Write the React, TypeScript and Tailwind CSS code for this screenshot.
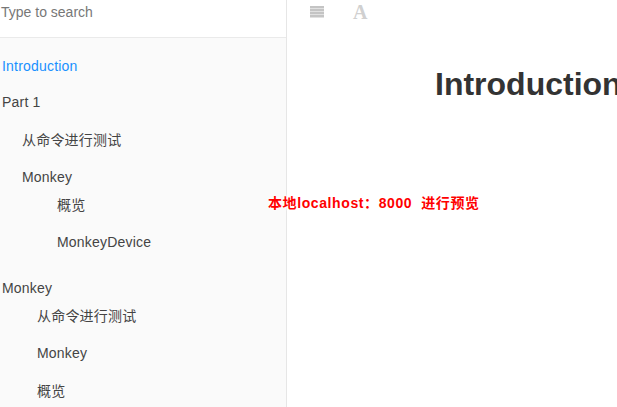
import React from 'react'

const CJK = `font-['Liberation_Sans','Noto_Sans_CJK_SC',sans-serif]`

const ITEMS = [
  { label: 'Introduction', cls: 'h-[36px] pl-[2px] text-[#1890ff]' },
  { label: 'Part 1', cls: 'h-[38px] pl-[2px]' },
  { label: '从命令进行测试', cls: 'h-[37px] pl-[22px]' },
  { label: 'Monkey', cls: 'h-[28px] pl-[22px]' },
  { label: '概览', cls: 'h-[37px] pl-[57px]' },
  { label: 'MonkeyDevice', cls: 'h-[46px] pl-[57px]' },
  { label: 'Monkey', cls: 'h-[28px] pl-[2px]' },
  { label: '从命令进行测试', cls: 'h-[37px] pl-[37px]' },
  { label: 'Monkey', cls: 'h-[38px] pl-[37px]' },
  { label: '概览', cls: 'h-[37px] pl-[37px]' },
]

export default function App() {
  return (
    <div className={`relative flex h-[407px] w-[617px] overflow-hidden bg-white text-[14px] text-[#333] ${CJK}`}>
      <aside className="w-[287px] shrink-0 overflow-hidden border-r border-[#e6e6e6] bg-[#fafafa]">
        <div className="h-[38px] border-b border-[#eaeaea] bg-white pl-[1px] pt-[4px] leading-[17px] text-[#777]">
          Type to search
        </div>
        <ul className="pt-[18px] tracking-[0.2px] text-[#444]">
          {ITEMS.map((item, i) => (
            <li key={i} className={`leading-[20px] ${item.cls}`}>
              {item.label}
            </li>
          ))}
        </ul>
      </aside>

      <main className="min-w-0 flex-1">
        <div className="flex h-[24px] items-center pl-[23px]">
          <svg width="14" height="12" viewBox="0 0 14 12" className="text-[#c4c4c4]">
            <path fill="currentColor" d="M0 0h14v2.4H0zM0 3h14v2.4H0zM0 6h14v2.4H0zM0 9h14v2.4H0z" />
          </svg>
          <span className="ml-[29px] font-['Liberation_Serif',serif] text-[20px] font-bold leading-none text-[#d0d0d0]">A</span>
        </div>
        <h1 className="whitespace-nowrap pl-[148px] pt-[40px] text-[32px] font-bold leading-[40px] text-[#333]">
          Introduction
        </h1>
      </main>

      <div className="absolute left-[268px] top-[193px] whitespace-nowrap text-[14px] font-bold leading-[20px] tracking-[0.6px] text-[#f00] [text-shadow:0_0_2px_#fff,0_0_2px_#fff,0_0_3px_#fff,0_0_3px_#fff,0_0_4px_#fff,0_0_4px_#fff]">
        本地localhost：8000 &nbsp;进行预览
      </div>
    </div>
  )
}
